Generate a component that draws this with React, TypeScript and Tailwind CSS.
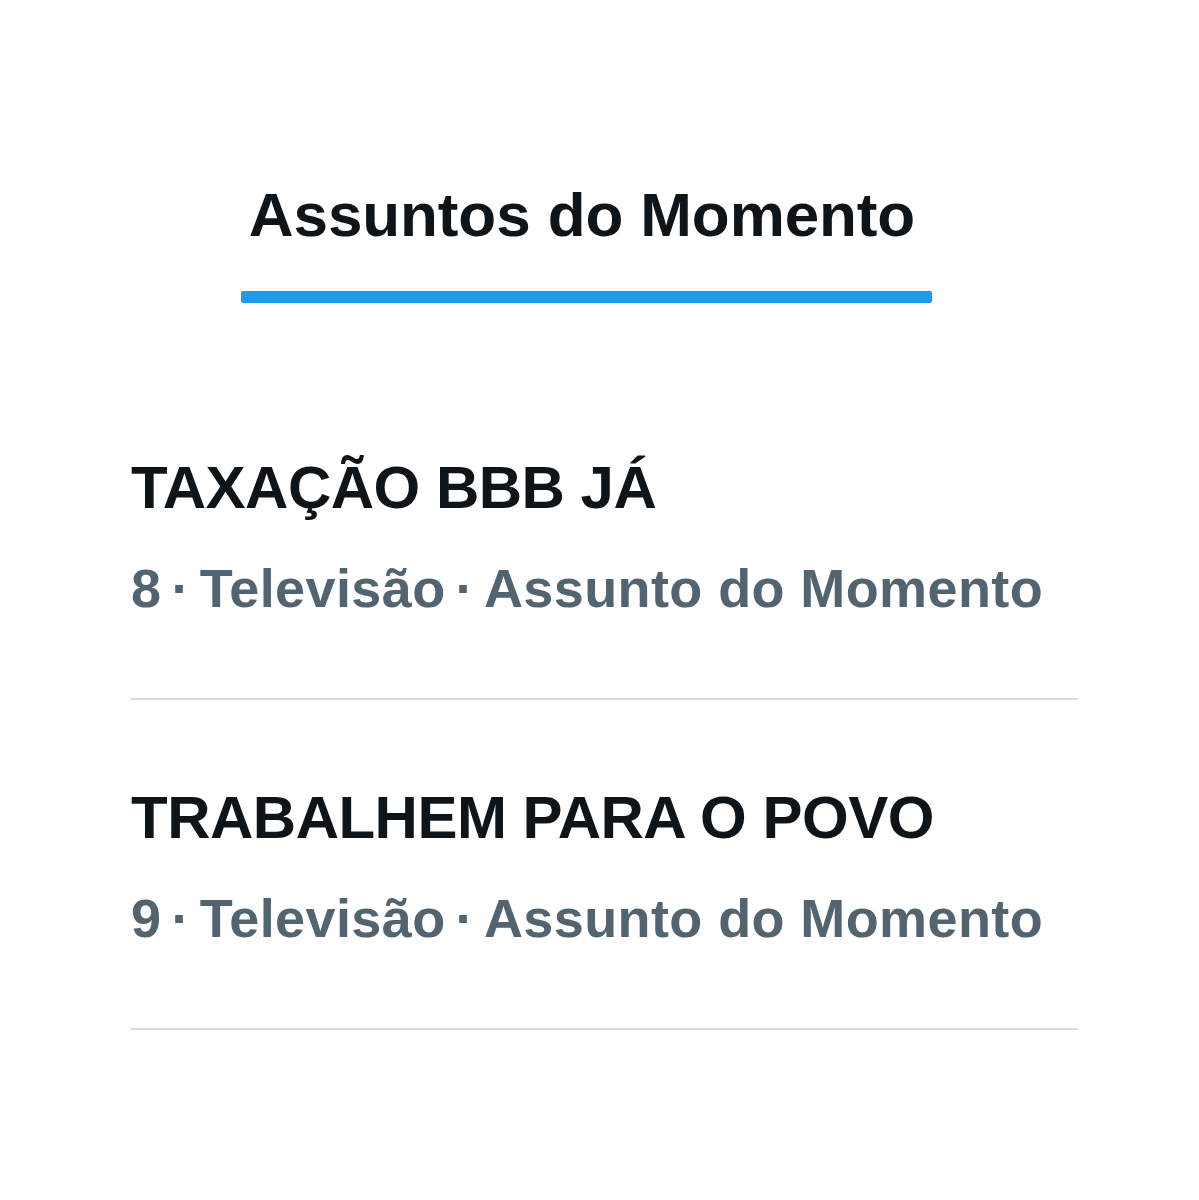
import React from 'react';

type Trend = {
  rank: number;
  title: string;
  category: string;
};

const trends: Trend[] = [
  { rank: 8, title: 'TAXAÇÃO BBB JÁ', category: 'Televisão' },
  { rank: 9, title: 'TRABALHEM PARA O POVO', category: 'Televisão' },
];

const Dot = () => <span className="mx-[10px]">·</span>;

const TrendRow = ({ trend, first }: { trend: Trend; first: boolean }) => (
  <li className={`border-b-2 border-[#d9dcde] pb-[83px] ${first ? 'pt-0' : 'pt-[88px]'}`}>
    <div className="text-[60px] leading-[60px] font-bold text-[#0f1419] tracking-[-0.5px]">
      {trend.title}
    </div>
    <div className="mt-[43px] text-[54px] leading-[54px] font-bold text-[#536471] tracking-[0.4px] whitespace-nowrap">
      {trend.rank}
      <Dot />
      {trend.category}
      <Dot />
      Assunto do Momento
    </div>
  </li>
);

const App = () => {
  return (
    <div className="min-h-screen w-full bg-white font-['Liberation_Sans',Arial,sans-serif] pt-[184px]">
      <div className="ml-[241px] w-[691px] flex flex-col items-center">
        <h1 className="text-[62px] leading-[62px] font-bold text-[#0f1419] tracking-[-0.1px] pr-[9px]">
          Assuntos do Momento
        </h1>
        <div className="mt-[45px] h-[12px] w-full bg-[#1d9bf0] rounded-[2px]" />
      </div>

      <ul className="ml-[130px] w-[948px] mt-[155px] pl-px">
        {trends.map((t, i) => (
          <TrendRow key={t.rank} trend={t} first={i === 0} />
        ))}
      </ul>
    </div>
  );
};

export default App;
